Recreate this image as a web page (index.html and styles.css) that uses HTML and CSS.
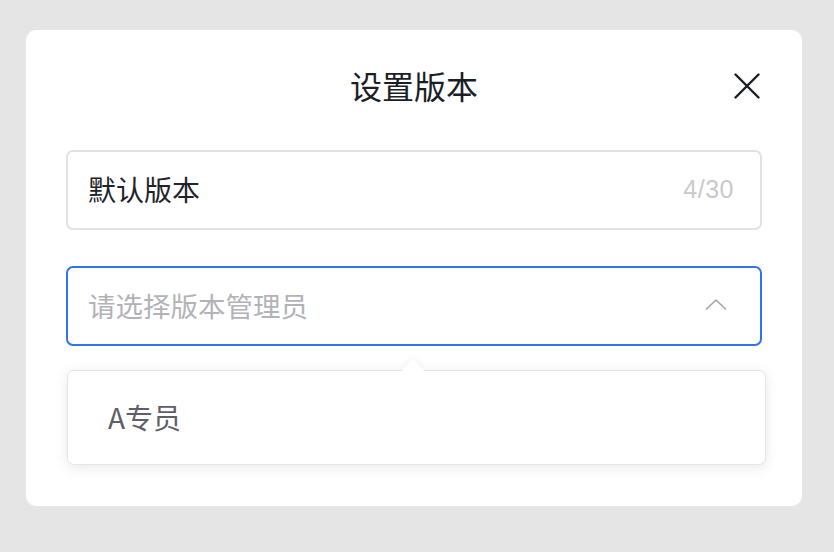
FILE: index.html
```html
<!DOCTYPE html>
<html lang="zh-CN">
<head>
<meta charset="utf-8">
<title>设置版本</title>
<link rel="stylesheet" href="styles.css">
</head>
<body>
<div class="modal">
  <div class="header">
    <span></span>
    <h1 class="title">设置版本</h1>
    <button class="close" aria-label="关闭">
      <svg width="26" height="26" viewBox="0 0 26 26"><path d="M1.5 1.5 L24.5 24.5 M24.5 1.5 L1.5 24.5" stroke="#1a1d27" stroke-width="2.4" stroke-linecap="round" fill="none"/></svg>
    </button>
  </div>
  <div class="field">
    <span class="value">默认版本</span>
    <span class="count">4/30</span>
  </div>
  <div class="field select">
    <span class="placeholder">请选择版本管理员</span>
    <svg class="chev" width="24" height="14" viewBox="0 0 24 14"><path d="M2 12.5 L12 3 L22 12.5" stroke="#a3a3a8" stroke-width="1.6" fill="none" stroke-linejoin="miter"/></svg>
  </div>
  <div class="dropdown">
    <div class="arrow"></div>
    <div class="option">A专员</div>
  </div>
</div>
</body>
</html>
```

FILE: styles.css
```css
html, body {
  margin: 0;
  padding: 0;
}
body {
  background: #e5e5e5;
  width: 834px;
  height: 552px;
  font-family: "Liberation Sans", "Noto Sans CJK SC", sans-serif;
}
.modal {
  margin: 30px 0 0 26px;
  width: 776px;
  height: 476px;
  box-sizing: border-box;
  background: #fff;
  border-radius: 10px;
  padding: 35px 40px 0 40px;
}
.header {
  display: grid;
  grid-template-columns: 1fr auto 1fr;
  align-items: center;
  height: 40px;
  margin-bottom: 45px;
}
.title {
  margin: 0;
  font-size: 32px;
  font-weight: 400;
  line-height: 40px;
  color: #1b1e29;
  font-family: "Noto Sans CJK SC", sans-serif;
}
.close {
  justify-self: end;
  margin-right: 2px;
  margin-top: 2px;
  width: 26px;
  height: 26px;
  padding: 0;
  border: 0;
  background: none;
  display: flex;
}
.field {
  height: 80px;
  box-sizing: border-box;
  border: 2px solid #e2e2e4;
  border-radius: 7px;
  display: flex;
  align-items: center;
  padding: 0 26px 3px 20px;
}
.value {
  flex: 1;
  font-size: 28px;
  color: #222329;
  font-family: "Noto Sans CJK SC", sans-serif;
}
.count {
  font-size: 25px;
  color: #c9c9cc;
  letter-spacing: 0.5px;
  margin-top: 2px;
}
.select {
  margin-top: 36px;
  border-color: #3272ee;
  padding-right: 32px;
}
.placeholder {
  flex: 1;
  font-size: 27.5px;
  color: #b2b2b8;
  font-family: "Noto Sans CJK SC", sans-serif;
}
.chev {
  margin-top: -1px;
}
.dropdown {
  position: relative;
  margin: 24px 0 0 1px;
  width: 699px;
  height: 95px;
  box-sizing: border-box;
  border: 1.5px solid #e3e3ea;
  border-radius: 7px;
  background: #fff;
  box-shadow: 0 3px 14px rgba(0, 0, 0, 0.09);
  display: flex;
  align-items: center;
  padding-bottom: 2px;
}
.arrow {
  position: absolute;
  top: -9px;
  left: 337px;
  width: 16px;
  height: 16px;
  background: #fff;
  transform: rotate(45deg);
  box-shadow: -2px -2px 5px rgba(0, 0, 0, 0.04);
}
.option {
  padding-left: 40px;
  font-size: 28px;
  color: #5e5e66;
  font-family: "Noto Sans CJK SC", sans-serif;
}
```
